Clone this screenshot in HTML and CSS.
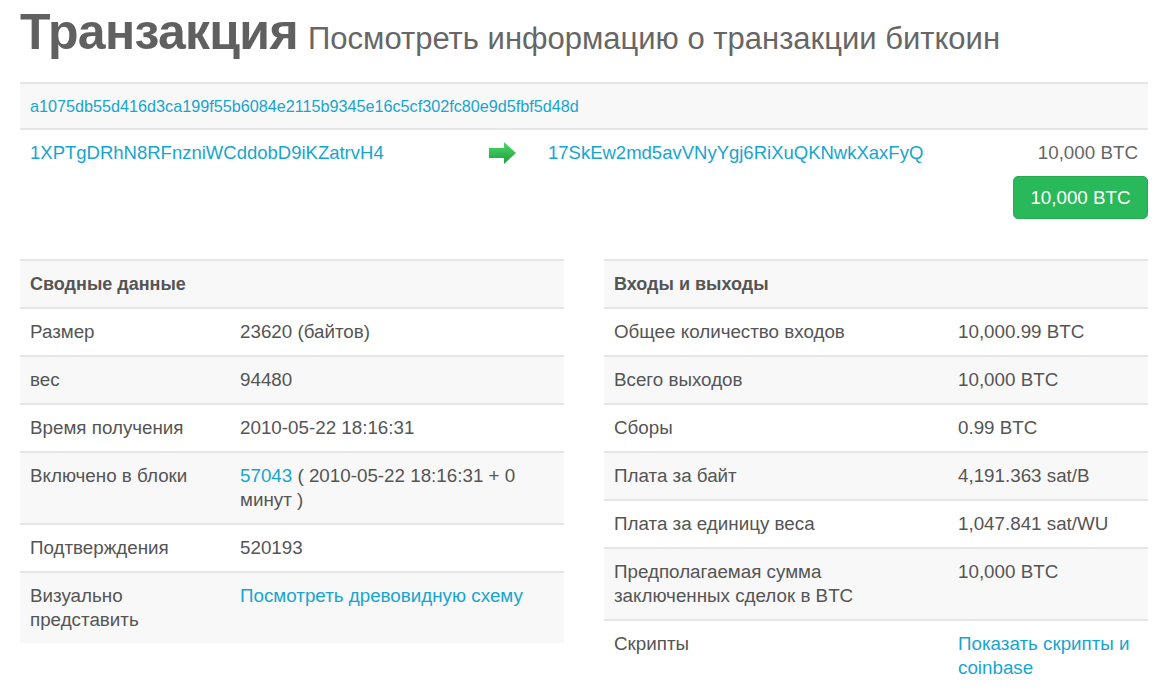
FILE: index.html
```html
<!doctype html>
<html lang="ru">
<head>
    <meta charset="utf-8">
    <title>Транзакция</title>
    <link rel="stylesheet" href="styles.css">
</head>
<body>
<div class="container">
    <h1 class="page-title">Транзакция <small>Посмотреть информацию о транзакции биткоин</small></h1>

    <table class="tx-table">
        <tr class="tx-hash">
            <th colspan="3"><a href="#">a1075db55d416d3ca199f55b6084e2115b9345e16c5cf302fc80e9d5fbf5d48d</a></th>
        </tr>
        <tr class="tx-io">
            <td class="tx-in"><a href="#">1XPTgDRhN8RFnzniWCddobD9iKZatrvH4</a></td>
            <td class="tx-arrow">
                <svg width="28" height="24" viewBox="0 0 28 24">
                    <defs>
                        <linearGradient id="arrowGrad" x1="0" y1="0" x2="0" y2="1">
                            <stop offset="0" stop-color="#4fd96a"/>
                            <stop offset="1" stop-color="#1c9f3c"/>
                        </linearGradient>
                    </defs>
                    <polygon points="0,7 15,7 15,1 27,12 15,23 15,17 0,17" fill="url(#arrowGrad)"/>
                </svg>
            </td>
            <td class="tx-out">
                <div class="out-row">
                    <a href="#">17SkEw2md5avVNyYgj6RiXuQKNwkXaxFyQ</a>
                    <span class="out-amount">10,000 BTC</span>
                </div>
            </td>
        </tr>
    </table>
    <div class="tx-total">
        <button class="btn-success">10,000 BTC</button>
    </div>

    <div class="tx-details">
        <table class="info-table summary">
            <colgroup><col class="col-label"><col></colgroup>
            <tr><th colspan="2">Сводные данные</th></tr>
            <tr><td>Размер</td><td>23620 (байтов)</td></tr>
            <tr><td>вес</td><td>94480</td></tr>
            <tr><td>Время получения</td><td>2010-05-22 18:16:31</td></tr>
            <tr><td>Включено в блоки</td><td><a href="#">57043</a> ( 2010-05-22 18:16:31 + 0 минут )</td></tr>
            <tr><td>Подтверждения</td><td>520193</td></tr>
            <tr><td>Визуально представить</td><td><a href="#">Посмотреть древовидную схему</a></td></tr>
        </table>

        <table class="info-table io">
            <colgroup><col class="col-label"><col></colgroup>
            <tr><th colspan="2">Входы и выходы</th></tr>
            <tr><td>Общее количество входов</td><td>10,000.99 BTC</td></tr>
            <tr><td>Всего выходов</td><td>10,000 BTC</td></tr>
            <tr><td>Сборы</td><td>0.99 BTC</td></tr>
            <tr><td>Плата за байт</td><td>4,191.363 sat/B</td></tr>
            <tr><td>Плата за единицу веса</td><td>1,047.841 sat/WU</td></tr>
            <tr><td>Предполагаемая сумма заключенных сделок в BTC</td><td>10,000 BTC</td></tr>
            <tr><td>Скрипты</td><td><a href="#">Показать скрипты и coinbase</a></td></tr>
        </table>
    </div>
</div>
</body>
</html>
```

FILE: styles.css
```css
body {
	margin: 0;
	font-family: "Liberation Sans", Arial, sans-serif;
	font-size: 18.8px;
	line-height: 24px;
	color: #555;
	background: #fff;
}
a {
	color: #17a5cf;
	text-decoration: none;
}
.container {
	width: 1128px;
	padding: 0 26px 0 20px;
}
h1.page-title {
	margin: 0;
	padding-top: 2px;
	font-size: 50px;
	line-height: 60px;
	font-weight: bold;
	color: #606060;
	letter-spacing: -0.7px;
	word-spacing: -3px;
}
h1.page-title small {
	font-size: 31px;
	font-weight: normal;
	color: #666;
	letter-spacing: 0;
	word-spacing: 0;
}
table {
	border-collapse: collapse;
	border-spacing: 0;
}
.tx-table {
	width: 100%;
	margin-top: 13px;
}
.tx-table th,
.tx-table td {
	border-top: 2px solid #e6e6e6;
	padding: 10px 10px;
	text-align: left;
	font-weight: normal;
	vertical-align: top;
}
.tx-hash th {
	background: #f8f8f8;
	font-size: 16.2px;
	line-height: 24px;
}
.tx-io td {
	padding-top: 11px;
	font-size: 18.5px;
}
.tx-in {
	width: 449px;
}
.tx-arrow {
	width: 49px;
	padding-left: 0 !important;
	padding-right: 0 !important;
}
.tx-arrow svg {
	display: block;
}
.out-row {
	display: flex;
	justify-content: space-between;
}
.out-amount {
	color: #666;
	font-size: 18.8px;
}
.tx-total {
	display: flex;
	justify-content: flex-end;
	margin-top: 1px;
}
.btn-success {
	font-family: "Liberation Sans", Arial, sans-serif;
	font-size: 18.8px;
	line-height: 24px;
	color: #fff;
	background: #29b95a;
	border: 1px solid #25ab52;
	border-radius: 5px;
	padding: 9px 10px 8px;
	width: 135px;
}
.tx-details {
	display: flex;
	align-items: flex-start;
	justify-content: space-between;
	margin-top: 40px;
}
.info-table {
	width: 544px;
	table-layout: fixed;
}
.info-table th,
.info-table td {
	border-top: 2px solid #e6e6e6;
	padding: 11px 10px;
	text-align: left;
	vertical-align: top;
}
.info-table th {
	font-weight: bold;
	font-size: 18px;
}
.info-table tr:nth-child(odd) th,
.info-table tr:nth-child(odd) td {
	background: #f8f8f8;
}
.summary .col-label {
	width: 210px;
}
.io .col-label {
	width: 344px;
}
```
